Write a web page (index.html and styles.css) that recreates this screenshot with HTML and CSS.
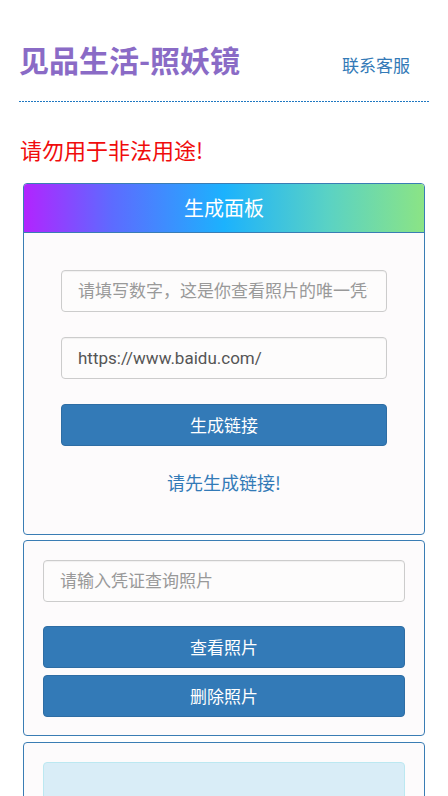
FILE: index.html
```html
<!DOCTYPE html>
<html lang="zh">
<head>
<meta charset="utf-8">
<title>见品生活-照妖镜</title>
<link rel="stylesheet" href="styles.css">
</head>
<body>
<div class="page">
  <div class="header">
    <h1 class="title">见品生活-照妖镜</h1>
    <a class="contact" href="#">联系客服</a>
  </div>
  <div class="divider"></div>
  <p class="warning">请勿用于非法用途!</p>

  <div class="card">
    <div class="card-head">生成面板</div>
    <div class="card-body body-wide">
      <input class="field field-clip" type="text" placeholder="请填写数字，这是你查看照片的唯一凭证">
      <input class="field" type="text" value="https://www.baidu.com/">
      <button class="btn">生成链接</button>
      <p class="hint">请先生成链接!</p>
    </div>
  </div>

  <div class="card">
    <div class="card-body body-narrow">
      <input class="field" type="text" placeholder="请输入凭证查询照片">
      <button class="btn btn-first">查看照片</button>
      <button class="btn btn-second">删除照片</button>
    </div>
  </div>

  <div class="card">
    <div class="card-body body-info">
      <div class="info"></div>
    </div>
  </div>
</div>
</body>
</html>
```

FILE: styles.css
```css
* { box-sizing: border-box; }

html, body {
  margin: 0;
  padding: 0;
  background: #ffffff;
  font-family: Roboto, "Noto Sans CJK SC", sans-serif;
}

.page {
  padding: 0 19px;
}

.header {
  display: flex;
  justify-content: space-between;
  align-items: baseline;
  padding-top: 41px;
  height: 77px;
}

.title {
  margin: 0;
  font-size: 30px;
  line-height: 36px;
  font-weight: 700;
  color: #8a6bc6;
  font-family: "Noto Sans CJK SC", sans-serif;
}

.contact {
  font-size: 17px;
  line-height: 24px;
  color: #337ab7;
  text-decoration: none;
  margin-right: 19px;
  font-family: "Noto Sans CJK SC", sans-serif;
}

.divider {
  margin-top: 24px;
  height: 1px;
  background: repeating-linear-gradient(90deg, #1f78c1 0 2px, transparent 2px 3px);
}

.warning {
  margin: 32px 0 0 1px;
  font-size: 22px;
  line-height: 30px;
  color: #f00c0c;
  font-family: "Noto Sans CJK SC", sans-serif;
}

.card {
  margin: 19px 4px 0 4px;
  border: 1px solid #3a7db4;
  border-radius: 4px;
  overflow: hidden;
  background: #fdfbfc;
}

.card + .card {
  margin-top: 5px;
}

.card + .card + .card {
  margin-top: 6px;
}

.card-head {
  height: 49px;
  border-bottom: 1px solid #3a7db4;
  background: linear-gradient(90deg, #b224ff 0%, #5d6bff 22%, #1cb2fd 50%, #5ad2c4 76%, #8be485 100%);
  color: #ffffff;
  font-size: 20px;
  line-height: 48px;
  text-align: center;
  font-family: "Noto Sans CJK SC", sans-serif;
}

.card-body {
  display: flex;
  flex-direction: column;
}

.body-wide {
  padding: 37px 37px 41px 37px;
  gap: 25px;
}

.body-narrow {
  padding: 19px 19px 18px 19px;
}

.body-info {
  padding: 19px 19px 0 19px;
}

.field {
  display: block;
  width: 100%;
  height: 42px;
  margin: 0;
  padding: 0 16px;
  border: 1px solid #cccccc;
  border-radius: 4px;
  background: #fdfcfc;
  box-shadow: inset 0 1px 1px rgba(0,0,0,0.05);
  font-family: Roboto, "Noto Sans CJK SC", sans-serif;
  font-size: 17px;
  color: #555555;
  outline: none;
}

.field-clip {
  padding-right: 18px;
}

.field::placeholder {
  color: #999999;
}

.btn {
  display: block;
  width: 100%;
  height: 42px;
  margin: 0;
  padding: 0;
  border: 1px solid #2e6da4;
  border-radius: 4px;
  background: #337ab7;
  color: #ffffff;
  font-family: "Noto Sans CJK SC", sans-serif;
  font-size: 17px;
  line-height: 40px;
}

.btn-first {
  margin-top: 24px;
}

.btn-second {
  margin-top: 7px;
}

.hint {
  margin: 0;
  font-size: 18px;
  line-height: 22px;
  color: #337ab7;
  text-align: center;
  font-family: "Noto Sans CJK SC", sans-serif;
}

.info {
  height: 80px;
  border: 1px solid #bce8f1;
  border-radius: 4px;
  background: #d9edf7;
}
```
